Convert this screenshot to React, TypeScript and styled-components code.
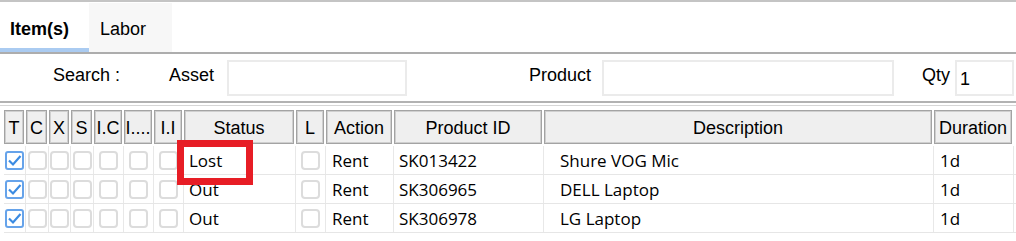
import React from "react";
import styled, { createGlobalStyle } from "styled-components";

const Global = createGlobalStyle`
  html, body { margin: 0; padding: 0; background: #ffffff; }
  body { font-family: "Liberation Sans", Arial, sans-serif; color: #000; }
  * { box-sizing: border-box; }
`;

type Col = { key: string; w: number; pad?: number };

const cols: Col[] = [
  { key: "T", w: 22 },
  { key: "C", w: 23 },
  { key: "X", w: 22 },
  { key: "S", w: 23 },
  { key: "I.C", w: 30 },
  { key: "I....", w: 30 },
  { key: "I.I", w: 30 },
  { key: "Status", w: 112, pad: 5 },
  { key: "L", w: 30 },
  { key: "Action", w: 68, pad: 6 },
  { key: "Product ID", w: 150, pad: 5 },
  { key: "Description", w: 390, pad: 16 },
  { key: "Duration", w: 80, pad: 6 },
];

const template = cols.map((c) => `${c.w}px`).join(" ");

type RowData = {
  status: string;
  action: string;
  pid: string;
  desc: string;
  dur: string;
};

const rows: RowData[] = [
  { status: "Lost", action: "Rent", pid: "SK013422", desc: "Shure VOG Mic", dur: "1d" },
  { status: "Out", action: "Rent", pid: "SK306965", desc: "DELL Laptop", dur: "1d" },
  { status: "Out", action: "Rent", pid: "SK306978", desc: "LG Laptop", dur: "1d" },
];

const Page = styled.div`
  width: 1016px;
  height: 241px;
  overflow: hidden;
  background: #fff;
`;

const TabBar = styled.div`
  display: flex;
  height: 52px;
  border-top: 2px solid #c4c4c4;
  padding-top: 1px;
`;

const Tab = styled.div<{ $active?: boolean; $w: number; $pad: number }>`
  width: ${(p) => p.$w}px;
  height: 49px;
  padding: 16px 0 0 ${(p) => p.$pad}px;
  font-size: 18px;
  line-height: 21px;
  font-weight: ${(p) => (p.$active ? 700 : 400)};
  background: ${(p) => (p.$active ? "#ffffff" : "#f7f7f7")};
  border-bottom: 4px solid ${(p) => (p.$active ? "#aacbf1" : "transparent")};
`;

const Divider = styled.div`
  height: 2px;
  background: #adadad;
`;

const SearchRow = styled.div`
  display: flex;
  align-items: flex-start;
  height: 47px;
  padding: 6px 0 0 53px;
`;

const Label = styled.div<{ $w: number; $ml?: number }>`
  width: ${(p) => p.$w}px;
  margin-left: ${(p) => p.$ml ?? 0}px;
  padding-top: 5px;
  font-size: 18px;
  line-height: 21px;
  white-space: nowrap;
`;

const Field = styled.input<{ $w: number }>`
  width: ${(p) => p.$w}px;
  height: 36px;
  border: 2px solid #ebebeb;
  background: #fff;
  outline: none;
  margin: 0;
  padding: 3px 0 0 3px;
  font-family: "Liberation Sans", Arial, sans-serif;
  font-size: 18px;
  color: #000;
`;

const Rule = styled.div`
  height: 2px;
  background: #b2b2b2;
  margin-bottom: 2px;
`;

const GridArea = styled.div`
  position: relative;
  border-top: 1px solid #d6d6d6;
  padding: 4px 0 0 4px;
  height: 136px;
`;

const HeaderRow = styled.div`
  display: grid;
  grid-template-columns: ${template};
  height: 34px;
  margin-bottom: 2px;
`;

const HeaderCell = styled.div`
  margin-right: 2px;
  display: flex;
  align-items: center;
  justify-content: center;
  padding-top: 2px;
  background: #efefef;
  border: 1px solid #a3a3a3;
  box-shadow: inset 1px 1px 0 #cfcfcf, inset -1px -1px 0 #cfcfcf;
  font-size: 18px;
  line-height: 21px;
  white-space: nowrap;
  overflow: hidden;
`;

const BodyRow = styled.div`
  display: grid;
  grid-template-columns: ${template};
  height: 29px;
  border-bottom: 1px solid #e6e6e6;
`;

const BodyCell = styled.div<{ $pad?: number }>`
  display: flex;
  align-items: center;
  justify-content: ${(p) => (p.$pad === undefined ? "center" : "flex-start")};
  padding: 2px 0 0 ${(p) => p.$pad ?? 0}px;
  border-right: 1px solid #e8e8e8;
  font-family: "Open Sans", "Noto Sans", sans-serif;
  font-size: 17px;
  line-height: 22px;
  white-space: nowrap;
  overflow: hidden;
`;

const CheckBox = styled.div<{ $checked?: boolean }>`
  width: 19px;
  height: 19px;
  margin-top: -2px;
  border: 2px solid ${(p) => (p.$checked ? "#66a3ea" : "#dcdcdc")};
  border-radius: ${(p) => (p.$checked ? 3 : 4)}px;
  background: #fff;
  display: flex;
  align-items: center;
  justify-content: center;
`;

const Highlight = styled.div`
  position: absolute;
  left: 177px;
  top: 34px;
  width: 76px;
  height: 45px;
  border: 7px solid #e71d25;
  pointer-events: none;
`;

const Check = () => (
  <svg width="15" height="15" viewBox="0 0 15 15">
    <path d="M2 7.5 L6 11.5 L13.5 3" fill="none" stroke="#3b8be2" strokeWidth="2.2" />
  </svg>
);

export default function App() {
  return (
    <Page>
      <Global />
      <TabBar>
        <Tab $active $w={89} $pad={10}>Item(s)</Tab>
        <Tab $w={83} $pad={11}>Labor</Tab>
      </TabBar>
      <Divider />
      <SearchRow>
        <Label $w={116}>Search :</Label>
        <Label $w={58}>Asset</Label>
        <Field $w={180} readOnly defaultValue="" />
        <Label $w={73} $ml={122}>Product</Label>
        <Field $w={292} readOnly defaultValue="" />
        <Label $w={33} $ml={28}>Qty</Label>
        <Field $w={59} readOnly defaultValue="1" />
      </SearchRow>
      <Rule />
      <GridArea>
        <HeaderRow>
          {cols.map((c) => (
            <HeaderCell key={c.key}>{c.key}</HeaderCell>
          ))}
        </HeaderRow>
        {rows.map((r) => (
          <BodyRow key={r.pid}>
            <BodyCell>
              <CheckBox $checked>
                <Check />
              </CheckBox>
            </BodyCell>
            {[0, 1, 2, 3, 4, 5].map((i) => (
              <BodyCell key={i}>
                <CheckBox />
              </BodyCell>
            ))}
            <BodyCell $pad={5}>{r.status}</BodyCell>
            <BodyCell>
              <CheckBox />
            </BodyCell>
            <BodyCell $pad={6}>{r.action}</BodyCell>
            <BodyCell $pad={5}>{r.pid}</BodyCell>
            <BodyCell $pad={16}>{r.desc}</BodyCell>
            <BodyCell $pad={6}>{r.dur}</BodyCell>
          </BodyRow>
        ))}
        <Highlight />
      </GridArea>
    </Page>
  );
}
